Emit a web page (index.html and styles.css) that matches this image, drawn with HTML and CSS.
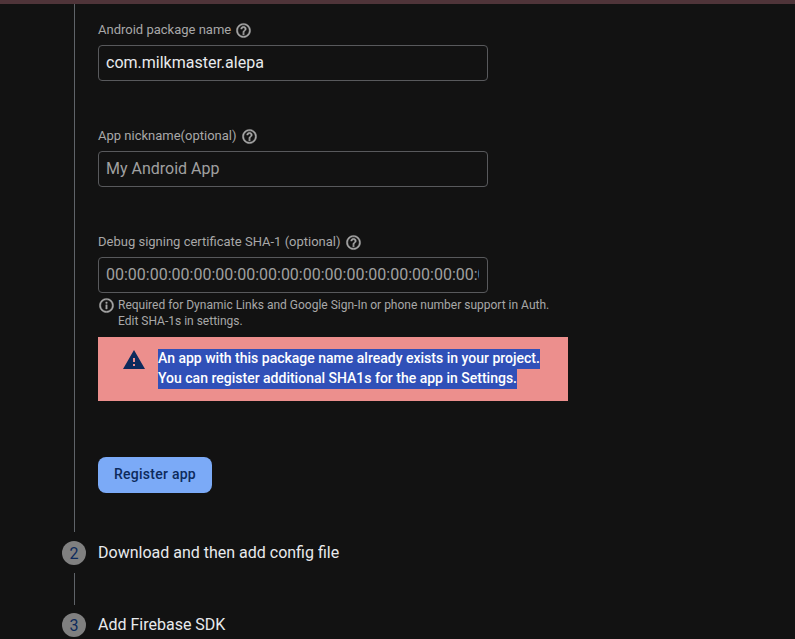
FILE: index.html
```html
<!DOCTYPE html>
<html lang="en">

<head>
    <meta charset="UTF-8">
    <meta name="viewport" content="width=device-width, initial-scale=1.0">
    <title>Add Firebase to your Android app</title>
    <link rel="stylesheet" href="styles.css">
</head>

<body>
    <div class="top-bar"></div>

    <div class="step-body">
        <div class="field">
            <label class="field-label" for="packageName"><span>Android package name</span>
                <svg class="help-icon" viewBox="0 0 24 24"><path d="M11 18h2v-2h-2v2zm1-16C6.48 2 2 6.48 2 12s4.48 10 10 10 10-4.48 10-10S17.52 2 12 2zm0 18c-4.41 0-8-3.59-8-8s3.59-8 8-8 8 3.59 8 8-3.59 8-8 8zm0-14c-2.21 0-4 1.79-4 4h2c0-1.1.9-2 2-2s2 .9 2 2c0 2-3 1.75-3 5h2c0-2.25 3-2.5 3-5 0-2.21-1.79-4-4-4z"/></svg>
            </label>
            <input class="field-input" type="text" id="packageName" value="com.milkmaster.alepa">
        </div>

        <div class="field">
            <label class="field-label" for="nickname"><span>App nickname(optional)</span>
                <svg class="help-icon" viewBox="0 0 24 24"><path d="M11 18h2v-2h-2v2zm1-16C6.48 2 2 6.48 2 12s4.48 10 10 10 10-4.48 10-10S17.52 2 12 2zm0 18c-4.41 0-8-3.59-8-8s3.59-8 8-8 8 3.59 8 8-3.59 8-8 8zm0-14c-2.21 0-4 1.79-4 4h2c0-1.1.9-2 2-2s2 .9 2 2c0 2-3 1.75-3 5h2c0-2.25 3-2.5 3-5 0-2.21-1.79-4-4-4z"/></svg>
            </label>
            <input class="field-input" type="text" id="nickname" placeholder="My Android App">
        </div>

        <div class="field field-last">
            <label class="field-label" for="sha1"><span>Debug signing certificate SHA-1 (optional)</span>
                <svg class="help-icon" viewBox="0 0 24 24"><path d="M11 18h2v-2h-2v2zm1-16C6.48 2 2 6.48 2 12s4.48 10 10 10 10-4.48 10-10S17.52 2 12 2zm0 18c-4.41 0-8-3.59-8-8s3.59-8 8-8 8 3.59 8 8-3.59 8-8 8zm0-14c-2.21 0-4 1.79-4 4h2c0-1.1.9-2 2-2s2 .9 2 2c0 2-3 1.75-3 5h2c0-2.25 3-2.5 3-5 0-2.21-1.79-4-4-4z"/></svg>
            </label>
            <input class="field-input" type="text" id="sha1" placeholder="00:00:00:00:00:00:00:00:00:00:00:00:00:00:00:00:00:00:00:00">
            <div class="hint">
                <svg class="info-icon" viewBox="0 0 24 24"><path d="M11 7h2v2h-2V7zm0 4h2v6h-2v-6zm1-9C6.48 2 2 6.48 2 12s4.48 10 10 10 10-4.48 10-10S17.52 2 12 2zm0 18c-4.41 0-8-3.59-8-8s3.59-8 8-8 8 3.59 8 8-3.59 8-8 8z"/></svg>
                <p>Required for Dynamic Links and Google Sign-In or phone number support in Auth.<br>Edit SHA-1s in settings.</p>
            </div>
        </div>

        <div class="alert">
            <svg class="alert-icon" viewBox="0 0 24 24"><path d="M1 21h22L12 2 1 21zm12-3h-2v-2h2v2zm0-4h-2v-4h2v4z"/></svg>
            <p class="alert-text">
                <span>An app with this package name already exists in your project.</span>
                <span>You can register additional SHA1s for the app in Settings.</span>
            </p>
        </div>

        <button class="register-btn" type="button">Register app</button>
    </div>

    <div class="step">
        <span class="step-number">2</span>
        <span class="step-title">Download and then add config file</span>
    </div>
    <div class="step-line"></div>
    <div class="step">
        <span class="step-number">3</span>
        <span class="step-title">Add Firebase SDK</span>
    </div>
</body>

</html>
```

FILE: styles.css
```css
body {
    font-family: 'Roboto', 'Liberation Sans', sans-serif;
    background-color: #121212;
    margin: 0;
    padding: 0;
    height: 639px;
    overflow: hidden;
}

.top-bar {
    height: 4px;
    background-color: #4f3439;
}

.step-body {
    margin-left: 74px;
    border-left: 1px solid #5f6368;
    padding-left: 23px;
    height: 528px;
    box-sizing: border-box;
    padding-top: 18px;
}

.field {
    height: 106px;
}

.field-last {
    height: 103px;
}

.field-label {
    display: flex;
    align-items: center;
    gap: 4px;
    height: 16px;
    margin-bottom: 7px;
    font-size: 13px;
    color: #a8a8a8;
}

.field-label span {
    position: relative;
    top: -1px;
}

.help-icon {
    width: 17px;
    height: 17px;
    fill: #a8a8a8;
    stroke: #a8a8a8;
    stroke-width: 0.6;
}

.field-input {
    display: block;
    width: 390px;
    height: 36px;
    padding: 0 8px 2px 7px;
    box-sizing: border-box;
    background: transparent;
    border: 1px solid #58595c;
    border-radius: 4px;
    font-family: inherit;
    font-size: 16px;
    color: #e8eaed;
    outline: none;
}

.field-input::placeholder {
    color: #a0a0a0;
    opacity: 1;
}

.hint {
    display: flex;
    gap: 3px;
    margin-top: 4px;
    font-size: 12px;
    line-height: 16px;
    color: #a8a8a8;
}

.hint p {
    margin: 0;
}

.info-icon {
    width: 17px;
    height: 17px;
    fill: #a8a8a8;
    stroke: #a8a8a8;
    stroke-width: 0.6;
    flex: none;
}

.alert {
    display: flex;
    align-items: center;
    width: 470px;
    height: 64px;
    padding-left: 24px;
    box-sizing: border-box;
    background-color: #ec8f8d;
}

.alert-icon {
    width: 24px;
    height: 24px;
    fill: #0d2a5c;
    flex: none;
    align-self: flex-start;
    margin-top: 11px;
    margin-right: 12px;
}

.alert-text {
    margin: 0;
    font-size: 14px;
    font-weight: 500;
    line-height: 20px;
    color: #fff;
}

.alert-text span {
    display: block;
    width: fit-content;
    height: 20px;
    line-height: 19px;
    background-color: #3050b8;
}

.register-btn {
    display: block;
    margin-top: 56px;
    width: 114px;
    height: 36px;
    padding: 0 0 2px;
    background-color: #7baaf7;
    color: #0d2a5c;
    border: none;
    border-radius: 8px;
    font-family: inherit;
    font-size: 14px;
    font-weight: 500;
    letter-spacing: 0.25px;
    cursor: pointer;
}

.step {
    display: flex;
    align-items: center;
    gap: 12px;
    margin-left: 62px;
    height: 24px;
    margin-top: 9px;
}

.step-number {
    width: 24px;
    height: 24px;
    border-radius: 50%;
    background-color: #808080;
    color: #0d2a5c;
    font-size: 16px;
    display: flex;
    align-items: center;
    justify-content: center;
}

.step-title {
    font-size: 16px;
    color: #e8eaed;
    position: relative;
    top: -1px;
}

.step-line {
    margin-left: 74px;
    margin-top: 8px;
    margin-bottom: -1px;
    width: 1px;
    height: 32px;
    background-color: #5f6368;
}
```
